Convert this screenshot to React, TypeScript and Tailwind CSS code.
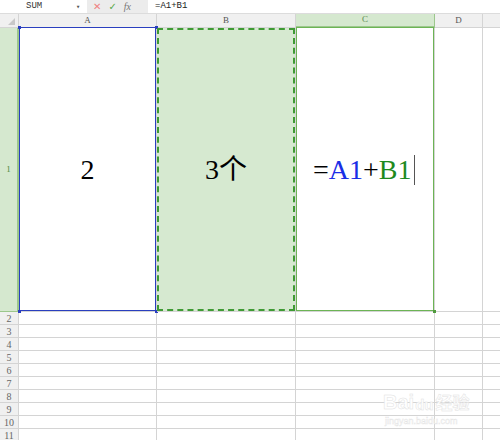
import React from "react";

const serif = { fontFamily: '"Liberation Serif", "Noto Sans CJK SC", serif' };

export default function App() {
  const rows = [2, 3, 4, 5, 6, 7, 8, 9, 10, 11];
  return (
    <div className="w-[500px] h-[440px] overflow-hidden bg-white relative" style={serif}>
      {/* formula bar */}
      <div className="h-[14px] flex items-center border-b border-[#dcdcdc] text-[9px] text-[#333]">
        <div className="w-[87px] h-full flex items-center relative" style={{ fontFamily: '"Liberation Mono", monospace' }}>
          <span className="ml-[26px]">SUM</span>
          <span className="absolute left-[76px] top-[2px] text-[7px] text-[#555]">▾</span>
        </div>
        <div className="w-[61px] h-full bg-[#ececec] flex items-center">
          <span className="ml-[6px] text-[#f08080] text-[10px] leading-none" style={{ fontFamily: '"DejaVu Sans", sans-serif' }}>✕</span>
          <span className="ml-[7px] text-[#5aa84a] text-[10px] leading-none" style={{ fontFamily: '"DejaVu Sans", sans-serif' }}>✓</span>
          <span className="ml-[7px] text-[#777] italic text-[10px] leading-none">fx</span>
        </div>
        <div className="ml-[7px] text-[9px] text-[#222]" style={{ fontFamily: '"Liberation Mono", monospace' }}>=A1+B1</div>
      </div>

      {/* sheet */}
      <div className="grid grid-cols-[19px_138px_139px_139px_48px_1fr] grid-rows-[14px_284px_repeat(10,13px)] text-[9px] text-[#555]">
        {/* header row */}
        <div className="bg-[#f0f0f0] border-r border-b border-[#d4d4d4] relative">
          <div className="absolute right-[3px] bottom-[2px] w-0 h-0 border-l-[7px] border-l-transparent border-b-[7px] border-b-[#c8c8c8]" />
        </div>
        <div className="bg-[#f0f0f0] border-r border-b border-[#d4d4d4] flex items-center justify-center">A</div>
        <div className="bg-[#f0f0f0] border-r border-b border-[#d4d4d4] flex items-center justify-center">B</div>
        <div className="bg-[#d5e8cf] border-r border-b-2 border-[#9cc78c] flex items-center justify-center text-[#5a8a4c]">C</div>
        <div className="bg-[#f0f0f0] border-r border-b border-[#d4d4d4] flex items-center justify-center">D</div>
        <div className="bg-[#f0f0f0] border-b border-[#d4d4d4]" />

        {/* row 1 */}
        <div className="bg-[#d5e8cf] border-r-2 border-b border-[#9cc78c] flex items-center justify-center text-[#4f8a3f]">1</div>
        <div className="relative border-r border-b border-[#d4d4d4] flex items-center justify-center">
          <div className="absolute inset-0 -top-px border border-[#2a3fbf]" />
          <div className="absolute -left-[1px] -top-[2px] w-[3px] h-[3px] bg-[#2a3fbf]" />
          <div className="absolute -right-[2px] -top-[2px] w-[3px] h-[3px] bg-[#2a3fbf]" />
          <div className="absolute -left-[1px] -bottom-[2px] w-[3px] h-[3px] bg-[#2a3fbf]" />
          <div className="absolute -right-[2px] -bottom-[2px] w-[3px] h-[3px] bg-[#2a3fbf]" />
          <span className="text-[28px] text-black leading-none">2</span>
        </div>
        <div className="relative bg-[#d6e9d0] border-r border-b border-[#d4d4d4] flex items-center justify-center">
          <div className="absolute inset-0 border-2 border-dashed border-[#3f9a34]" />
          <span className="text-[28px] text-black leading-none">3个</span>
        </div>
        <div className="relative border-r border-b border-[#d4d4d4] flex items-center">
          <div className="absolute inset-0 -top-px border-[1.5px] border-[#6cb455]" />
          <div className="absolute -right-[2px] -bottom-[2px] w-[3px] h-[3px] bg-[#4f9a3c]" />
          <span className="ml-[17px] text-[28px] leading-none text-black">
            =<span className="text-[#1a2ee6]">A1</span>+<span className="text-[#1e8a1e]">B1</span>
          </span>
          <span className="ml-[2px] w-px h-[30px] bg-[#555]" />
        </div>
        <div className="border-r border-b border-[#d4d4d4]" />
        <div className="border-b border-[#d4d4d4]" />

        {rows.map((r) => (
          <React.Fragment key={r}>
            <div className="bg-[#f0f0f0] border-r border-b border-[#d4d4d4] flex items-center justify-center text-[10px] text-[#666]">{r}</div>
            <div className="border-r border-b border-[#d4d4d4]" />
            <div className="border-r border-b border-[#d4d4d4]" />
            <div className="border-r border-b border-[#d4d4d4]" />
            <div className="border-r border-b border-[#d4d4d4]" />
            <div className="border-b border-[#d4d4d4]" />
          </React.Fragment>
        ))}
      </div>

      {/* watermark */}
      <div className="absolute left-[383px] top-[392px] flex flex-col items-start pointer-events-none" style={{ fontFamily: '"Liberation Sans", "Noto Sans CJK SC", sans-serif' }}>
        <div className="flex items-end text-[20px] font-bold leading-none text-white [-webkit-text-stroke:0.5px_#e2e2e2]">
          <span>Bai</span>
          <span className="text-[15px] ml-[1px]">du</span>
          <span className="text-[17px] ml-[2px]">经验</span>
        </div>
        <div className="text-[9px] text-white [-webkit-text-stroke:0.4px_#e4e4e4] mt-[3px] ml-[2px]">jingyan.baidu.com</div>
      </div>
    </div>
  );
}
